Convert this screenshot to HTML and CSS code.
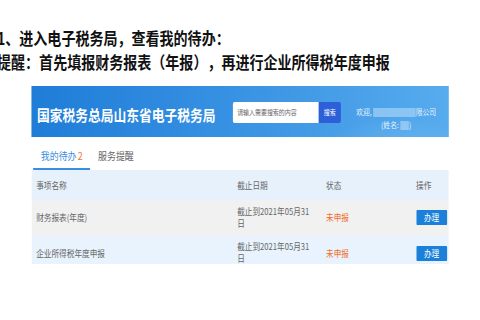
FILE: index.html
```html
<!DOCTYPE html>
<html lang="zh">
<head>
<meta charset="utf-8">
<link rel="stylesheet" href="styles.css">
</head>
<body>
<div class="page">
  <p class="step">1、进入电子税务局，查看我的待办：</p>
  <p class="tip">提醒：首先填报财务报表（年报），再进行企业所得税年度申报</p>
  <div class="banner">
    <div class="title">国家税务总局山东省电子税务局</div>
    <div class="search"><span class="input">请输入需要搜索的内容</span><span class="btn">搜索</span></div>
    <div class="welcome">
      <div>欢迎, <span class="blur w-company"></span>限公司</div>
      <div>(姓名: <span class="blur w-name"></span>)</div>
    </div>
  </div>
  <div class="tabs">
    <span class="tab active">我的待办<em>2</em></span>
    <span class="tab">服务提醒</span>
  </div>
  <div class="table">
    <div class="row head"><div>事项名称</div><div>截止日期</div><div>状态</div><div>操作</div></div>
    <div class="row odd"><div>财务报表(年度)</div><div><div class="date">截止到2021年05月31日</div></div><div class="status">未申报</div><div><span class="do">办理</span></div></div>
    <div class="row even"><div>企业所得税年度申报</div><div><div class="date">截止到2021年05月31日</div></div><div class="status">未申报</div><div><span class="do">办理</span></div></div>
  </div>
</div>
</body>
</html>
```
FILE: styles.css
```css
html, body {
  margin: 0;
  background: #fff;
  overflow: hidden;
}
.page {
  width: 565px;
  transform: scaleX(0.85);
  transform-origin: 0 0;
  font-family: "Noto Sans CJK SC", "Noto Sans", sans-serif;
  text-spacing-trim: space-all;
}
.step, .tip {
  margin: 0 0 0 -3.5px;
  font-size: 16.5px;
  font-weight: bold;
  line-height: 24px;
  color: #111;
  white-space: nowrap;
}
.step {
  margin-top: 26px;
}
.banner {
  margin: 12px 0 0 36.5px;
  width: 491.5px;
  height: 51px;
  display: flex;
  align-items: center;
  color: #fff;
  background:
    radial-gradient(ellipse 120px 40px at 430px 60px, rgba(255,255,255,0.12), rgba(255,255,255,0) 70%),
    linear-gradient(90deg, #1f7dd8 0%, #3690e2 45%, #57acee 100%);
}
.title {
  padding-left: 7px;
  margin-top: 5px;
  font-size: 15px;
  font-weight: bold;
  white-space: nowrap;
}
.search {
  display: flex;
  margin-left: 20.5px;
  margin-top: 2px;
  height: 21px;
}
.input {
  width: 101px;
  box-sizing: border-box;
  padding-left: 5px;
  background: #fff;
  color: #666;
  font-size: 7px;
  line-height: 21px;
  border-radius: 2px 0 0 2px;
  white-space: nowrap;
}
.btn {
  width: 26px;
  background: #2c5fd8;
  color: #fff;
  font-size: 7px;
  line-height: 21px;
  text-align: center;
  border-radius: 0 2px 2px 0;
}
.welcome {
  margin-left: 18px;
  margin-top: 12px;
  font-size: 8px;
  line-height: 13px;
  text-align: center;
  white-space: nowrap;
  color: #eaf4fd;
}
.blur {
  display: inline-block;
  height: 9px;
  vertical-align: middle;
  background: rgba(255, 255, 255, 0.35);
}
.w-company { width: 50px; }
.w-name { width: 10px; }
.tabs {
  display: flex;
  margin-left: 39px;
  font-size: 10.5px;
  line-height: 14px;
}
.tab {
  padding: 12px 9px 5px;
  border-bottom: 2px solid transparent;
  color: #666;
}
.tab.active {
  color: #3b8de0;
  border-bottom-color: #3b8de0;
}
.tab em {
  font-style: normal;
  color: #f5742c;
  margin-left: 1.5px;
}
.table {
  margin-left: 36.5px;
  width: 491.5px;
  height: 94px;
  overflow: hidden;
  font-size: 9px;
  color: #666;
}
.row {
  display: grid;
  grid-template-columns: 236.5px 104.5px 106px 1fr;
  align-items: center;
  height: 35.5px;
}
.row > div {
  padding-left: 6px;
}
.head {
  height: 30px;
  background: #e6f1fc;
}
.odd {
  background: #f1f1f1;
}
.even {
  background: #e8f3fd;
}
.date {
  width: 88px;
  line-height: 12px;
}
.status {
  color: #f26a2b;
}
.do {
  display: inline-block;
  width: 36.5px;
  height: 15px;
  line-height: 15px;
  text-align: center;
  background: #1a80d9;
  color: #fff;
  border-radius: 1px;
}
```
